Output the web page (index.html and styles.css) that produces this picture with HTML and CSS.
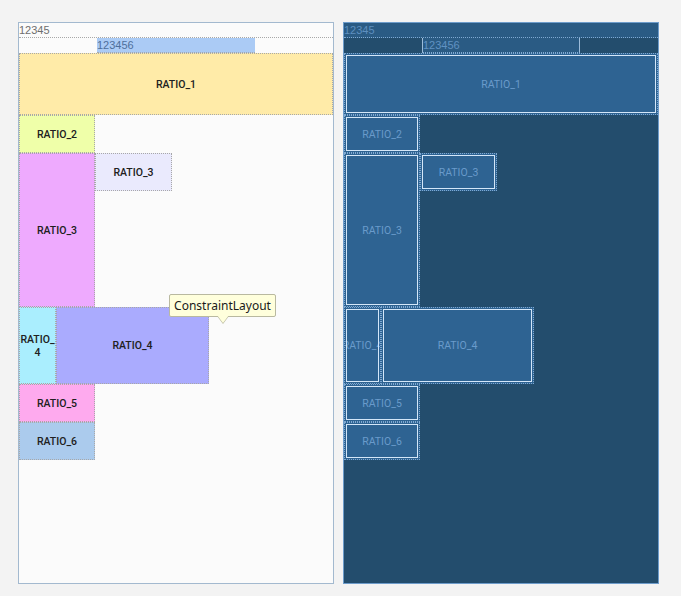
FILE: index.html
```html
<!DOCTYPE html>
<html>
<head>
<meta charset="utf-8">
<link rel="stylesheet" href="styles.css">
</head>
<body>
<div class="stage">
  <div class="panel design">
    <div class="v t1">12345</div>
    <div class="row2"><div class="v t2">123456</div></div>
    <div class="v box r1">RATIO_1</div>
    <div class="v box r2">RATIO_2</div>
    <div class="row"><div class="v box r3a">RATIO_3</div><div class="v box r3b">RATIO_3</div></div>
    <div class="row"><div class="v box r4a">RATIO_4</div><div class="v box r4b">RATIO_4</div></div>
    <div class="v box r5">RATIO_5</div>
    <div class="v box r6">RATIO_6</div>
    <div class="tip">ConstraintLayout</div>
  </div>
  <div class="panel blueprint">
    <div class="v t1">12345</div>
    <div class="row2"><div class="v t2">123456</div></div>
    <div class="v box r1">RATIO_1</div>
    <div class="v box r2">RATIO_2</div>
    <div class="row"><div class="v box r3a">RATIO_3</div><div class="v box r3b">RATIO_3</div></div>
    <div class="row"><div class="v box r4a">RATIO_4</div><div class="v box r4b">RATIO_4</div></div>
    <div class="v box r5">RATIO_5</div>
    <div class="v box r6">RATIO_6</div>
  </div>
</div>
</body>
</html>
```
FILE: styles.css
```css
html, body {
  margin: 0;
  padding: 0;
  background: #f3f3f3;
}
.stage {
  display: flex;
  gap: 9px;
  padding: 22px 0 0 18px;
}
.panel {
  position: relative;
  width: 316px;
  height: 562px;
  box-sizing: border-box;
  display: flex;
  flex-direction: column;
  align-items: flex-start;
}
.design {
  background: #fbfbfb;
  border: 1px solid #a3b9cf;
}
.blueprint {
  background: #234d6d;
  border: 1px solid #6d9ccb;
}
.v {
  box-sizing: border-box;
  flex: none;
}
.design .v {
  border: 1px dotted #a8a8a8;
}
.blueprint .v {
  border: 1px dotted #7fa9d2;
}
.t1 {
  width: 314px;
  height: 15px;
  font: 11px/14px "Liberation Sans", Arial, sans-serif;
  padding-left: 0;
  border-width: 0 0 1px 0 !important;
}
.design .t1 { color: #6e6e6e; }
.blueprint .t1 { color: #5e8fbf; background: #2a5b84; }
.row2 {
  width: 314px;
  height: 15px;
  padding-left: 78px;
  box-sizing: border-box;
  flex: none;
}
.t2 {
  width: 158px;
  height: 15px;
  font: 11px/14px "Liberation Sans", Arial, sans-serif;
  border-width: 0 0 1px 0 !important;
}
.design .t2 { background: #abcbf5; color: #4e6f9c; }
.blueprint .t2 {
  background: #2a5b84;
  color: #6092c2;
  border-left: 1px solid #9dbcda !important;
  border-right: 1px solid #9dbcda !important;
}
.box {
  display: flex;
  align-items: center;
  justify-content: center;
  text-align: center;
  font: 500 10.5px/13px Roboto, "Noto Sans", sans-serif;
  overflow: hidden;
}
.design .box { color: #202020; }
.blueprint .box {
  background: #2e6392;
  color: #6a9bcb;
  font-weight: 400;
  outline: 1px solid #d4e7f9;
  outline-offset: -3px;
  white-space: nowrap;
}
.row {
  display: flex;
  align-items: flex-start;
  flex: none;
}
.r1 { width: 314px; height: 62px; }
.r2, .r5, .r6 { width: 76px; height: 38px; }
.r3a { width: 76px; height: 154px; }
.r3b { width: 77px; height: 38px; }
.r4a { width: 37px; height: 77px; }
.r4b { width: 153px; height: 77px; }
.design .r1 { background: #ffeba8; }
.design .r2 { background: #efffa9; }
.design .r3a { background: #eeaafe; }
.design .r3b { background: #eaeafd; }
.design .r4a { background: #aaeefe; word-break: break-all; }
.design .r4b { background: #aaabfe; }
.design .r5 { background: #feaaee; }
.design .r6 { background: #abcbed; }
.tip {
  position: absolute;
  left: 150px;
  top: 271px;
  width: 107px;
  height: 23px;
  box-sizing: border-box;
  background: #ffffdc;
  border: 1px solid #b9b9a0;
  border-radius: 2px;
  font: 12px/21px "Noto Sans", "Open Sans", sans-serif;
  color: #1a1a1a;
  text-align: center;
}
.tip::before,
.tip::after {
  content: "";
  position: absolute;
  left: 47px;
  width: 0;
  height: 0;
  border-left: 6px solid transparent;
  border-right: 6px solid transparent;
}
.tip::before {
  top: 21px;
  border-top: 8px solid #b9b9a0;
}
.tip::after {
  top: 20px;
  border-top: 8px solid #ffffdc;
}
```
